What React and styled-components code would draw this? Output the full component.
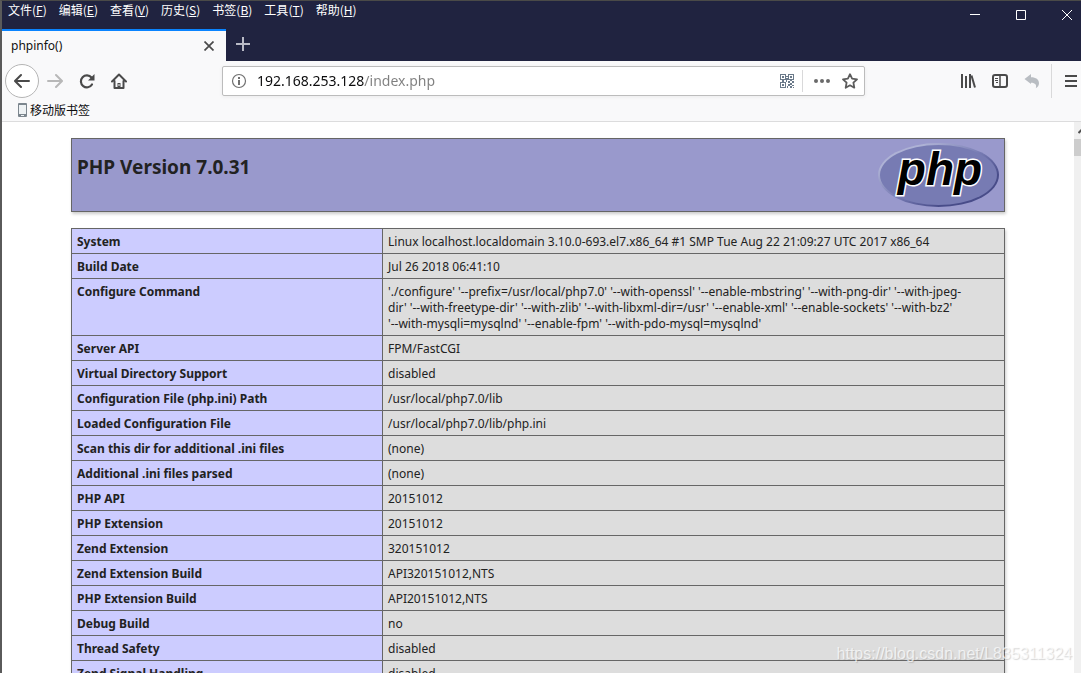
import React from "react";
import styled, { createGlobalStyle } from "styled-components";

const menus = [
  ["文件", "F"],
  ["编辑", "E"],
  ["查看", "V"],
  ["历史", "S"],
  ["书签", "B"],
  ["工具", "T"],
  ["帮助", "H"],
];

const rows = [
  ["System", "Linux localhost.localdomain 3.10.0-693.el7.x86_64 #1 SMP Tue Aug 22 21:09:27 UTC 2017 x86_64"],
  ["Build Date", "Jul 26 2018 06:41:10"],
  [
    "Configure Command",
    "'./configure' '--prefix=/usr/local/php7.0' '--with-openssl' '--enable-mbstring' '--with-png-dir' '--with-jpeg-\ndir' '--with-freetype-dir' '--with-zlib' '--with-libxml-dir=/usr' '--enable-xml' '--enable-sockets' '--with-bz2'\n'--with-mysqli=mysqlnd' '--enable-fpm' '--with-pdo-mysql=mysqlnd'",
  ],
  ["Server API", "FPM/FastCGI"],
  ["Virtual Directory Support", "disabled"],
  ["Configuration File (php.ini) Path", "/usr/local/php7.0/lib"],
  ["Loaded Configuration File", "/usr/local/php7.0/lib/php.ini"],
  ["Scan this dir for additional .ini files", "(none)"],
  ["Additional .ini files parsed", "(none)"],
  ["PHP API", "20151012"],
  ["PHP Extension", "20151012"],
  ["Zend Extension", "320151012"],
  ["Zend Extension Build", "API320151012,NTS"],
  ["PHP Extension Build", "API20151012,NTS"],
  ["Debug Build", "no"],
  ["Thread Safety", "disabled"],
  ["Zend Signal Handling", "disabled"],
];

function PhpLogo() {
  return (
    <svg width="121" height="64" viewBox="0 0 121 64" role="img" aria-label="PHP logo">
      <defs>
        <linearGradient id="rim" x1="0" y1="0" x2="1" y2="1">
          <stop offset="0.2" stopColor="#aeb2d5" />
          <stop offset="0.5" stopColor="#777bb3" />
          <stop offset="0.75" stopColor="#484c89" />
        </linearGradient>
      </defs>
      <ellipse cx="60.5" cy="32" rx="60.5" ry="32" fill="url(#rim)" />
      <ellipse cx="60.5" cy="32" rx="58.5" ry="30" fill="#777bb3" />
      <text
        x="62"
        y="42"
        textAnchor="middle"
        fontFamily="Liberation Sans, sans-serif"
        fontSize="46"
        fontWeight="700"
        fontStyle="italic"
        fill="#000"
        stroke="#fff"
        strokeWidth="3"
        paintOrder="stroke"
      >
        php
      </text>
    </svg>
  );
}

function QrIcon() {
  return (
    <svg width="14" height="14" viewBox="0 0 14 14" fill="#6b7a8a">
      <path fillRule="evenodd" d="M0 0h6v6H0zM1 1v4h4V1zM8 0h6v6H8zM9 1v4h4V1zM0 8h6v6H0zM1 9v4h4V9z" />
      <path d="M2 2h2v2H2zM10 2h2v2h-2zM2 10h2v2H2zM6 2h2v1H6zM6 4h2v2H6zM2 6h2v2H2zM6 6h1v2H6zM8 7h2v2H8zM10 6h2v1h-2zM12 7h2v2h-2zM10 9h2v2h-2zM8 10h2v2H8zM12 11h2v1h-2zM10 12h2v2h-2zM7 12h1v2H7zM13 13h1v1h-1z" />
    </svg>
  );
}

export default function App() {
  return (
    <>
      <GlobalStyle />
      <Window>
        <TitleBar>
          <Menu>
            {menus.map(([label, key]) => (
              <MenuButton key={key}>
                <span>
                  {label}(<u>{key}</u>)
                </span>
              </MenuButton>
            ))}
          </Menu>
          <Controls>
            <ControlButton aria-label="Minimize">
              <svg width="10" height="10"><path d="M0 4.5h10" /></svg>
            </ControlButton>
            <ControlButton aria-label="Maximize">
              <svg width="10" height="10"><path d="M.5.5h9v9h-9z" /></svg>
            </ControlButton>
            <ControlButton aria-label="Close">
              <svg width="10" height="10"><path d="M0 0l10 10M10 0L0 10" /></svg>
            </ControlButton>
          </Controls>
        </TitleBar>
        <TabStrip>
          <Tab>
            <TabTitle>phpinfo()</TabTitle>
            <TabButton aria-label="Close tab">
              <svg width="10" height="10" stroke="#4a4a4a" strokeWidth="1.7"><path d="M.5.5l9 9M9.5.5l-9 9" /></svg>
            </TabButton>
          </Tab>
          <TabButton $wide aria-label="New tab">
            <svg width="14" height="14" stroke="#b9bac6" strokeWidth="2"><path d="M7 0v14M0 7h14" /></svg>
          </TabButton>
        </TabStrip>
        <Toolbar>
          <BackButton aria-label="Back">
            <svg width="16" height="16" fill="none" stroke="#4a4a4a" strokeWidth="2" strokeLinecap="round" strokeLinejoin="round">
              <path d="M15 8H1.5M7 2L1 8l6 6" />
            </svg>
          </BackButton>
          <ToolButton aria-label="Forward">
            <svg width="16" height="16" fill="none" stroke="#b8b8b8" strokeWidth="2" strokeLinecap="round" strokeLinejoin="round">
              <path d="M1 8h13.500M9 2l6 6-6 6" />
            </svg>
          </ToolButton>
          <ToolButton aria-label="Reload">
            <svg width="16" height="16" fill="none" stroke="#4a4a4a" strokeWidth="2.200">
              <path d="M13 11.500A6 6 0 1 1 12.500 4.500" strokeLinecap="round" />
              <path d="M15.500 1v6.500H9z" fill="#4a4a4a" stroke="none" />
            </svg>
          </ToolButton>
          <ToolButton aria-label="Home">
            <svg width="16" height="16" fill="none" stroke="#4a4a4a" strokeWidth="2" strokeLinejoin="round" strokeLinecap="round">
              <path d="M1 8.500L8 1.500l7 7M3.500 8v7h9V8" />
              <path d="M6.500 10h3v5h-3z" fill="#4a4a4a" stroke="none" />
              <path d="M8 11v2" stroke="#f9f9fa" strokeWidth="1" strokeLinecap="butt" />
            </svg>
          </ToolButton>
          <UrlBar>
            <IconButton aria-label="Site information">
              <svg width="16" height="16" fill="none" stroke="#707070">
                <circle cx="8" cy="8" r="6.500" strokeWidth="1.200" />
                <path d="M8 7v5M8 4v2" strokeWidth="2" />
              </svg>
            </IconButton>
            <UrlInput aria-label="Address" defaultValue="192.168.253.128/index.php" />
            <IconButton aria-label="QR code">
              <QrIcon />
            </IconButton>
            <Divider />
            <IconButton $wide aria-label="Page actions">
              <svg width="16" height="6" fill="#6a6a6a">
                <circle cx="2" cy="3" r="2" />
                <circle cx="8" cy="3" r="2" />
                <circle cx="14" cy="3" r="2" />
              </svg>
            </IconButton>
            <IconButton aria-label="Bookmark this page">
              <svg width="16" height="16" fill="none" stroke="#5c5c5c" strokeWidth="1.800" strokeLinejoin="round">
                <path d="M8 1.200l2.100 4.500 4.900.6-3.600 3.400.9 5L8 12.300l-4.300 2.400.9-5L1 6.300l4.900-.6z" />
              </svg>
            </IconButton>
          </UrlBar>
          <ToolButton aria-label="Library">
            <svg width="16" height="16" fill="none" stroke="#4a4a4a" strokeWidth="2">
              <path d="M2 1v14M6 3v12M10 1v14" />
              <path d="M11.500 2.500L15 14.500" />
            </svg>
          </ToolButton>
          <ToolButton aria-label="Sidebars">
            <svg width="16" height="16" fill="none" stroke="#4a4a4a">
              <rect x="1" y="2" width="14" height="12" rx="2" strokeWidth="2" />
              <path d="M8 2v12" strokeWidth="1.500" />
              <path d="M3 5.500h3M3 7.500h3M4 9.500h2" />
            </svg>
          </ToolButton>
          <ToolButton aria-label="Undo close tab">
            <svg width="16" height="16" fill="#b9bdc2">
              <path d="M0.500 6l6.500-5v3.300c5 0 8 2.200 8 6 0 2.200-1.200 3.900-3.200 4.900 1-3-.4-5.400-4.800-5.400V11z" />
            </svg>
          </ToolButton>
          <Divider $tall />
          <ToolButton aria-label="Open menu">
            <svg width="12" height="12" stroke="#4a4a4a" strokeWidth="2"><path d="M0 1h12M0 6h12M0 11h12" /></svg>
          </ToolButton>
        </Toolbar>
        <Bookmarks>
          <BookmarkButton>
            <svg width="9" height="14">
              <rect x="0" y="0" width="9" height="14" rx="1" fill="#7c868e" />
              <path d="M1 2h7v9H1z" fill="#eef2f4" />
              <path d="M3 12h3v1H3z" fill="#eef2f4" />
            </svg>
            移动版书签
          </BookmarkButton>
        </Bookmarks>
        <Viewport>
          <Page>
            <Banner>
              <h1>PHP Version 7.0.31</h1>
              <a href="http://www.php.net/">
                <PhpLogo />
              </a>
            </Banner>
            <InfoTable>
              <tbody>
                {rows.map(([name, value]) => (
                  <tr key={name}>
                    <th scope="row">{name}</th>
                    <td>{value}</td>
                  </tr>
                ))}
              </tbody>
            </InfoTable>
          </Page>
          <Scrollbar>
            <ScrollButton aria-label="Scroll up">
              <svg width="9" height="6" fill="none" stroke="#505050" strokeWidth="2"><path d="M.5 5L4.500 1l4 4" /></svg>
            </ScrollButton>
            <Thumb />
          </Scrollbar>
        </Viewport>
        <Watermark>https://blog.csdn.net/L835311324</Watermark>
      </Window>
    </>
  );
}

const GlobalStyle = createGlobalStyle`
  * {
    box-sizing: border-box;
  }
  body {
    margin: 0;
    overflow: hidden;
    font-family: "Noto Sans", "Noto Sans CJK SC", sans-serif;
    font-size: 12px;
  }
  button {
    display: flex;
    align-items: center;
    justify-content: center;
    flex-shrink: 0;
    padding: 0;
    border: 0;
    background: none;
    font: inherit;
    color: inherit;
  }
  svg {
    display: block;
    flex-shrink: 0;
  }
`;

const Window = styled.div`
  position: relative;
  display: flex;
  flex-direction: column;
  height: 100vh;
  overflow: hidden;
  border-top: 1px solid #4a4a48;
  border-left: 2px solid #5a5a5a;
  background: #fff;
`;

const TitleBar = styled.div`
  display: flex;
  justify-content: space-between;
  height: 28px;
  flex-shrink: 0;
  background: #202340;
  color: #fff;
`;

const Menu = styled.div`
  display: flex;
  gap: 12px;
  height: 18px;
  padding-left: 6px;
`;

const MenuButton = styled.button`
  && {
    font-family: "Noto Sans CJK SC", sans-serif;
    line-height: 16px;
  }
  u {
    text-underline-offset: 1px;
  }
`;

const Controls = styled.div`
  display: flex;
  margin-right: -9px;
`;

const ControlButton = styled.button`
  width: 46px;
  height: 28px;
  svg {
    fill: none;
    stroke: #fff;
  }
`;

const TabStrip = styled.div`
  display: flex;
  height: 32px;
  flex-shrink: 0;
  background: #202340;
`;

const Tab = styled.div`
  display: flex;
  align-items: center;
  justify-content: space-between;
  width: 224px;
  padding: 0 8px 0 9px;
  border-top: 2px solid #0a84ff;
  background: #f9f9fa;
  color: #111;
`;

const TabTitle = styled.span`
  padding-bottom: 2px;
`;

const TabButton = styled.button`
  width: ${({ $wide }) => ($wide ? 34 : 18)}px;
  height: 30px;
`;

const Toolbar = styled.div`
  display: flex;
  align-items: center;
  height: 40px;
  flex-shrink: 0;
  margin-right: -6px;
  padding-left: 3px;
  background: #f9f9fa;
`;

const ToolButton = styled.button`
  width: 32px;
  height: 32px;
`;

const BackButton = styled.button`
  && {
    width: 34px;
    height: 34px;
    border: 1px solid #b5b5b5;
    border-radius: 50%;
    background: #fff;
  }
`;

const UrlBar = styled.div`
  display: flex;
  align-items: center;
  flex: 1;
  height: 30px;
  margin: 0 87px;
  padding: 0 2px 0 4px;
  border: 1px solid #bcbcbc;
  border-radius: 2px;
  background: #fff;
  box-shadow: 0 1px 4px rgba(0, 0, 0, 0.06);
`;

const IconButton = styled.button`
  width: ${({ $wide }) => ($wide ? 32 : 24)}px;
  height: 28px;
`;

// host part is dark, the path after it is dimmed
const UrlInput = styled.input`
  flex: 1;
  min-width: 0;
  height: 28px;
  margin: 0 6px;
  padding: 0 0 2px;
  border: 0;
  outline: 0;
  font-family: "Noto Sans", sans-serif;
  font-size: 14px;
  background: linear-gradient(to right, #0c0c0d 107px, #7f7f7f 107px);
  background-clip: text;
  color: transparent;
`;

const Divider = styled.span`
  width: 1px;
  height: ${({ $tall }) => ($tall ? 34 : 22)}px;
  margin: 0 3px;
  background: #d9d9da;
`;

const Bookmarks = styled.div`
  display: flex;
  height: 21px;
  flex-shrink: 0;
  padding: 0 14px 3px;
  border-bottom: 1px solid #dcdcdd;
  background: #f9f9fa;
`;

const BookmarkButton = styled.button`
  && {
    gap: 3px;
    padding: 0 2px;
    font-family: "Noto Sans CJK SC", sans-serif;
    line-height: 16px;
    color: #0c0c0d;
  }
`;

const Viewport = styled.div`
  display: flex;
  flex: 1;
  min-height: 0;
`;

const Page = styled.main`
  flex: 1;
  overflow: hidden;
  padding: 16px 69px 0;
  color: #222;
`;

const Banner = styled.header`
  display: flex;
  justify-content: space-between;
  height: 74px;
  max-width: 934px;
  margin: 0 auto 16px;
  padding: 4px 5px;
  border: 1px solid #666;
  background: #9999cc;
  box-shadow: 1px 2px 3px #ccc;
  h1 {
    margin: 12px 0 0;
    font-size: 19px;
    line-height: 24px;
  }
`;

const InfoTable = styled.table`
  width: 100%;
  max-width: 934px;
  margin: 0 auto;
  border-collapse: collapse;
  table-layout: fixed;
  box-shadow: 1px 2px 3px #ccc;
  font-size: 12px;
  line-height: 16px;
  th,
  td {
    padding: 5px 5px 3px;
    border: 1px solid #666;
    vertical-align: baseline;
    text-align: left;
  }
  th {
    width: 311px;
    background: #ccccff;
  }
  td {
    background: #ddd;
    overflow-wrap: break-word;
    white-space: pre-line;
  }
`;

const Scrollbar = styled.div`
  width: 7px;
  overflow: hidden;
  background: #f0f0f0;
`;

const ScrollButton = styled.button`
  width: 17px;
  height: 17px;
`;

const Thumb = styled.div`
  height: 17px;
  background: #cdcdcd;
`;

const Watermark = styled.span`
  position: absolute;
  right: 9px;
  bottom: 9px;
  font-family: "Liberation Sans", sans-serif;
  font-size: 16px;
  line-height: 20px;
  color: rgba(255, 255, 255, 0.7);
  text-shadow: 1px 1px 1px rgba(120, 120, 120, 0.3);
`;
